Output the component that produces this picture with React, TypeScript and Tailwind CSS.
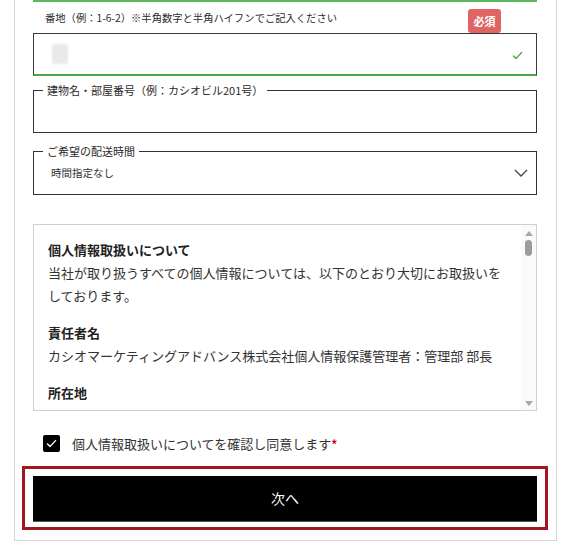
const font = { fontFamily: '"Noto Sans CJK JP", "Noto Sans", sans-serif' }

function CheckIcon({ className }: { className?: string }) {
    return (
        <svg viewBox="0 0 12 10" className={className} fill="none">
            <polyline
                points="1.5,5.5 4.5,8.2 10.5,1.8"
                stroke="currentColor"
                strokeWidth="1.6"
                strokeLinecap="round"
                strokeLinejoin="round"
            />
        </svg>
    )
}

function Section({ title, children }: { title: string; children?: React.ReactNode }) {
    return (
        <div className="mb-[14px]">
            <p className="font-bold text-[#222] leading-[23px]">{title}</p>
            {children && <p className="text-[#333] leading-[23px]">{children}</p>}
        </div>
    )
}

export default function App() {
    return (
        <div className="bg-white w-[572px] h-[558px] overflow-hidden" style={font}>
            <div className="ml-[14px] w-[543px] border-x border-b border-[#d6d6d6] pl-[18px] pr-[19px] pb-[10px]">
                {/* previous input bottom */}
                <div className="h-[2px] bg-[#5cb85c]" />

                <div className="flex justify-between items-end h-[31px]">
                    <p className="self-start pt-[9px] pl-[12px] text-[10.3px] leading-[14px] text-[#2a2a2a]">
                        番地（例：1-6-2）※半角数字と半角ハイフンでご記入ください
                    </p>
                    <span className="mr-[36px] w-[33px] h-[24px] flex items-center justify-center rounded-[3px] bg-[#e06464] text-white text-[11px] font-bold">
                        必須
                    </span>
                </div>

                <div className="h-[43px] border border-[#3a3a3a] border-b-2 border-b-[#47a847] flex items-start justify-between">
                    <div className="ml-[18px] mt-[10px] w-[16px] h-[20px] bg-[#e9e9e9] blur-[1px]" />
                    <CheckIcon className="w-[11px] h-[9px] mr-[13px] mt-[17px] text-[#4a9e4a]" />
                </div>

                <fieldset className="mt-[7px] border border-[#333] h-[50px]">
                    <legend className="ml-[9px] px-[4px] text-[11px] leading-[14px] text-[#2a2a2a]">
                        建物名・部屋番号（例：カシオビル201号）
                    </legend>
                </fieldset>

                <fieldset className="mt-[11px] border border-[#333]">
                    <legend className="ml-[9px] px-[4px] text-[11px] leading-[14px] text-[#2a2a2a]">
                        ご希望の配送時間
                    </legend>
                    <div className="flex items-center justify-between h-[24px] mt-[3px] mb-[9px]">
                        <span className="pl-[17px] text-[10.5px] text-[#333]">時間指定なし</span>
                        <svg viewBox="0 0 14 8" className="w-[14px] h-[8px] mr-[8px]" fill="none">
                            <polyline points="1,1 7,7 13,1" stroke="#444" strokeWidth="1.3" />
                        </svg>
                    </div>
                </fieldset>

                <div className="mt-[29px] h-[187px] border border-[#cfcfcf] flex overflow-hidden">
                    <div className="flex-1 pt-[13px] pl-[14px] text-[13px]">
                        <div className="w-[462px]">
                            <Section title="個人情報取扱いについて">
                                当社が取り扱うすべての個人情報については、以下のとおり大切にお取扱いをしております。
                            </Section>
                            <Section title="責任者名">
                                カシオマーケティングアドバンス株式会社個人情報保護管理者：管理部 部長
                            </Section>
                            <Section title="所在地" />
                        </div>
                    </div>
                    <div className="w-[15px] bg-[#fafafa] flex flex-col items-center pt-[6px] pb-[4px]">
                        <div className="w-0 h-0 border-x-[4px] border-x-transparent border-b-[5px] border-b-[#a8a8a8]" />
                        <div className="mt-[4px] w-[7px] h-[16px] rounded-full bg-[#9c9c9c]" />
                        <div className="flex-1" />
                        <div className="w-0 h-0 border-x-[4px] border-x-transparent border-t-[5px] border-t-[#a8a8a8]" />
                    </div>
                </div>

                <label className="mt-[24px] ml-[10px] flex items-center gap-[12px]">
                    <span className="w-[17px] h-[17px] bg-black rounded-[2px] flex items-center justify-center">
                        <CheckIcon className="w-[11px] h-[9px] text-white" />
                    </span>
                    <span className="text-[13px] text-[#333] leading-[17px]">
                        個人情報取扱いについてを確認し同意します
                        <span className="text-[#d0021b] text-[12px] font-bold align-top">*</span>
                    </span>
                </label>

                <div className="mt-[14px] -mx-[11px] border-[3px] border-[#a3151f] px-[8px] pt-[7px] pb-[5px]">
                    <button className="w-full h-[46px] bg-black border-b border-[#555] text-white text-[14px]">
                        次へ
                    </button>
                </div>
            </div>
        </div>
    )
}
